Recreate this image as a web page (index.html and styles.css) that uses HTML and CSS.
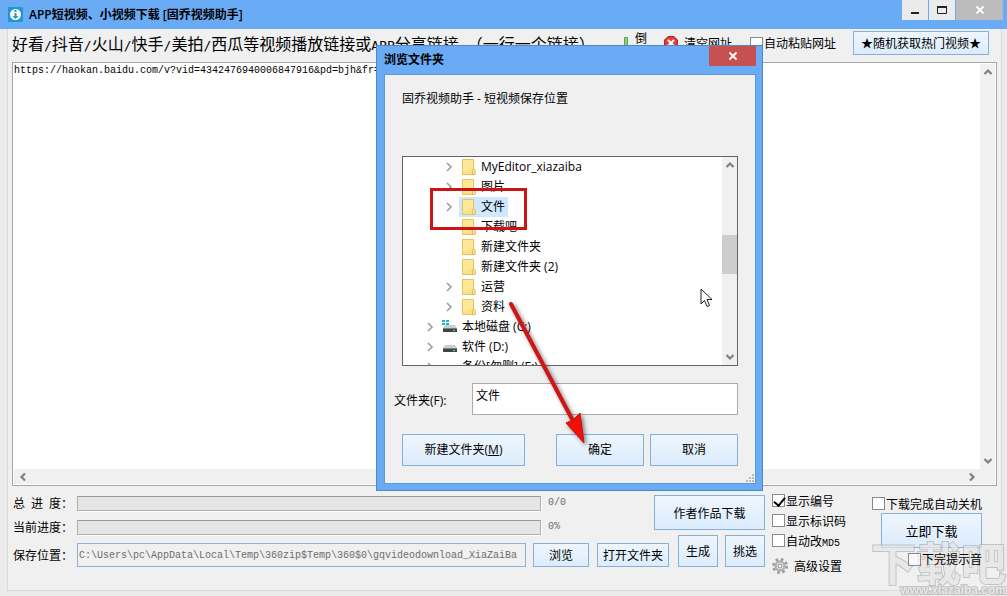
FILE: index.html
```html
<!DOCTYPE html>
<html lang="zh-CN">
<head>
  <meta charset="UTF-8">
  <title>APP短视频、小视频下载 [固乔视频助手]</title>
  <link rel="stylesheet" href="styles.css">
</head>
<body>
  <svg class="defs" width="0" height="0" aria-hidden="true">
    <symbol id="folder" viewBox="0 0 14 16">
      <path d="M.5.5h11v9.500l1.500 1v4.500H.5z" fill="#fbdf83" stroke="#e6c25c"/>
      <path d="M1 1h10v8L1 14z" fill="#ffe99f" opacity=".7"/>
      <path d="M10.500 15.500v-4l1-1.500 1.500 1.500v4z" fill="#ffedae" stroke="#dfb955"/>
    </symbol>
    <symbol id="chevron" viewBox="0 0 10 10">
      <path d="M3 1l4 4-4 4" fill="none" stroke="#a0a0a0" stroke-width="1.700"/>
    </symbol>
    <symbol id="scroll-arrow" viewBox="0 0 10 10">
      <path d="M1.500 7L5 3.500 8.500 7" fill="none" stroke="#808080" stroke-width="2.200"/>
    </symbol>
    <symbol id="drive" viewBox="0 0 16 14">
      <path d="M3 5h10l2 3H1z" fill="#c9d0d3"/>
      <path d="M1 8h14v4H1z" fill="#3d4548"/>
      <path d="M1 8h14v1H1z" fill="#798386"/>
      <path d="M11 10h2v1h-2z" fill="#6fe08c"/>
    </symbol>
    <symbol id="close" viewBox="0 0 10 10">
      <path d="M1.500 1.500l7 7m0-7l-7 7" fill="none" stroke="#fff" stroke-width="1.800"/>
    </symbol>
  </svg>

  <div class="window">
    <header class="titlebar">
      <svg class="app-icon" width="15" height="15" viewBox="0 0 15 15">
        <rect width="15" height="15" rx="1" fill="#1c9bd0"/>
        <circle cx="7.500" cy="7.500" r="5.500" fill="#fff"/>
        <path d="M6.500 3h2v2h-2zM6.500 6h2v3h2l-3 3-3-3h2z" fill="#2b92c4"/>
      </svg>
      <h1>APP短视频、小视频下载 [固乔视频助手]</h1>
      <div class="window-buttons">
        <button class="win-btn" aria-label="最小化"><svg width="10" height="10" viewBox="0 0 10 10"><path d="M1 7h8v2H1z" fill="#222"/></svg></button>
        <button class="win-btn" aria-label="最大化"><svg width="12" height="10" viewBox="0 0 12 10"><path d="M1.500 2v6.500h9V2" fill="none" stroke="#222"/><path d="M1 1h10v2H1z" fill="#222"/></svg></button>
        <button class="win-btn close" aria-label="关闭"><svg width="10" height="10"><use href="#close"/></svg></button>
      </div>
    </header>

    <main class="panel">
      <div class="toolbar">
        <label class="hint" for="urls">好看<span>/</span>抖音<span>/</span>火山<span>/</span>快手<span>/</span>美拍<span>/</span>西瓜等视频播放链接或<span>APP</span>分享链接。（一行一个链接）</label>
        <button class="tool sort">
          <svg width="6" height="16" viewBox="0 0 6 16"><path d="M1.500.5h3v15h-3z" fill="#8fd07f" stroke="#5aa84e"/></svg>
          <span>倒<br>序</span>
        </button>
        <button class="tool clear">
          <svg width="14" height="14" viewBox="0 0 14 14">
            <path d="M4 .5h6L13.500 4v6L10 13.500H4L.5 10V4z" fill="#e23a36" stroke="#b8211f"/>
            <path d="M4 4l6 6m0-6l-6 6" stroke="#fff" stroke-width="2.200"/>
          </svg>
          <span>清空网址</span>
        </button>
        <label class="check"><input type="checkbox">自动粘贴网址</label>
        <button class="btn random">★随机获取热门视频★</button>
      </div>

      <div class="url-box">
        <textarea id="urls" spellcheck="false" wrap="off">https://haokan.baidu.com/v?vid=4342476940006847916&amp;pd=bjh&amp;fr=</textarea>
        <div class="scroll vertical">
          <svg width="10" height="10"><use href="#scroll-arrow"/></svg>
          <svg class="down" width="10" height="10"><use href="#scroll-arrow"/></svg>
        </div>
        <div class="scroll horizontal">
          <svg class="left" width="10" height="10"><use href="#scroll-arrow"/></svg>
          <svg class="right" width="10" height="10"><use href="#scroll-arrow"/></svg>
        </div>
      </div>

      <div class="footer">
        <div class="output">
          <div class="output-top">
            <div class="progress-list">
              <div class="progress-row">
                <span class="label spread"><i>总</i><i>进</i><i>度：</i></span>
                <div class="bar"></div>
                <span class="value">0/0</span>
              </div>
              <div class="progress-row">
                <span class="label">当前进度：</span>
                <div class="bar"></div>
                <span class="value">0%</span>
              </div>
            </div>
            <button class="btn author">作者作品下载</button>
          </div>
          <div class="path-row">
            <label class="label" for="path">保存位置：</label>
            <input class="path" id="path" type="text" readonly value="C:\Users\pc\AppData\Local\Temp\360zip$Temp\360$0\gqvideodownload_XiaZaiBa">
            <button class="btn browse">浏览</button>
            <button class="btn open">打开文件夹</button>
            <button class="btn small">生成</button>
            <button class="btn small">挑选</button>
          </div>
        </div>
        <div class="options">
          <label class="check"><input type="checkbox" checked>显示编号</label>
          <label class="check"><input type="checkbox">显示标识码</label>
          <label class="check"><input type="checkbox"><span>自动改<span class="mono">MD5</span></span></label>
          <button class="tool settings">
            <svg width="16" height="16" viewBox="0 0 16 16">
              <circle cx="8" cy="8" r="6.500" fill="none" stroke="#9c9c9c" stroke-width="3" stroke-dasharray="2.550 2.550"/>
              <circle cx="8" cy="8" r="4.500" fill="#ececec" stroke="#b2b2b2" stroke-width="2.500"/>
              <circle cx="8" cy="8" r="2" fill="#f4f4f4" stroke="#8c8c8c"/>
            </svg>
            <span>高级设置</span>
          </button>
        </div>
        <div class="download">
          <label class="check"><input type="checkbox">下载完成自动关机</label>
          <button class="btn start">立即下载</button>
          <label class="check sound"><input type="checkbox">下完提示音</label>
        </div>
      </div>
    </main>

    <section class="dialog" role="dialog" aria-labelledby="dialog-title">
      <header class="dialog-title">
        <h2 id="dialog-title">浏览文件夹</h2>
        <button class="dialog-close" aria-label="关闭"><svg width="10" height="10"><use href="#close"/></svg></button>
      </header>
      <div class="dialog-body">
        <p>固乔视频助手 - 短视频保存位置</p>
        <div class="tree-box">
          <ul class="tree">
            <li><svg class="arrow"><use href="#chevron"/></svg><span class="node"><svg class="folder"><use href="#folder"/></svg>MyEditor_xiazaiba</span></li>
            <li><svg class="arrow"><use href="#chevron"/></svg><span class="node"><svg class="folder"><use href="#folder"/></svg>图片</span></li>
            <li><svg class="arrow"><use href="#chevron"/></svg><span class="node selected"><svg class="folder"><use href="#folder"/></svg>文件</span></li>
            <li><svg class="arrow"></svg><span class="node"><svg class="folder"><use href="#folder"/></svg>下载吧</span></li>
            <li><svg class="arrow"></svg><span class="node"><svg class="folder"><use href="#folder"/></svg>新建文件夹</span></li>
            <li><svg class="arrow"></svg><span class="node"><svg class="folder"><use href="#folder"/></svg>新建文件夹 (2)</span></li>
            <li><svg class="arrow"><use href="#chevron"/></svg><span class="node"><svg class="folder"><use href="#folder"/></svg>运营</span></li>
            <li><svg class="arrow"><use href="#chevron"/></svg><span class="node"><svg class="folder"><use href="#folder"/></svg>资料</span></li>
            <li class="root"><svg class="arrow"><use href="#chevron"/></svg><span class="node"><svg class="drive" viewBox="0 0 16 14"><use href="#drive"/><path d="M0 0h3v2H0zM4 0h3v2H4zM0 3h3v2H0zM4 3h3v2H4z" fill="#20b0d8"/></svg>本地磁盘 (C:)</span></li>
            <li class="root"><svg class="arrow"><use href="#chevron"/></svg><span class="node"><svg class="drive"><use href="#drive"/></svg>软件 (D:)</span></li>
            <li class="root"><svg class="arrow"><use href="#chevron"/></svg><span class="node"><svg class="drive"></svg>备份[勿删] (E:)</span></li>
          </ul>
          <div class="scroll vertical">
            <svg width="10" height="10"><use href="#scroll-arrow"/></svg>
            <div class="track"><div class="thumb"></div></div>
            <svg class="down" width="10" height="10"><use href="#scroll-arrow"/></svg>
          </div>
        </div>
        <div class="name-row">
          <label for="folder-name">文件夹(F):</label>
          <input id="folder-name" type="text" value="文件">
        </div>
        <div class="dialog-buttons">
          <button class="btn new-folder">新建文件夹(<u>M</u>)</button>
          <button class="btn">确定</button>
          <button class="btn">取消</button>
        </div>
        <svg class="grip" width="9" height="9" viewBox="0 0 9 9"><path d="M6 0h2v2H6zM3 3h2v2H3zM6 3h2v2H6zM0 6h2v2H0zM3 6h2v2H3zM6 6h2v2H6z" fill="#bbb"/></svg>
      </div>
    </section>

    <div class="highlight"></div>
    <svg class="pointer-arrow" width="90" height="150" viewBox="0 0 90 150">
      <path d="M7 4L68 119" stroke="#cf1515" stroke-width="4" stroke-linecap="round"/>
      <path d="M80 143L62 123l7-3 7-7z" fill="#f01008" stroke="#c81010"/>
    </svg>
    <svg class="cursor" width="13" height="20" viewBox="0 0 13 20">
      <path d="M1 1v15l3.500-3.500L7 18.500l2.500-1L7 11.500h5z" fill="#fff" stroke="#222"/>
    </svg>
    <div class="watermark">
      <span class="mark">下载吧</span>
      <span class="site">www.xiazaiba.com</span>
    </div>
  </div>
</body>
</html>
```
FILE: styles.css
```css
* {
  box-sizing: border-box;
}

body {
  margin: 0;
  font-family: "Noto Sans CJK SC", sans-serif;
  font-size: 12px;
  line-height: 16px;
  color: #000;
  background: #ebebeb;
}

button,
input,
textarea {
  margin: 0;
  padding: 0;
  font: inherit;
  color: inherit;
  border-radius: 0;
}

svg {
  flex: none;
}

.defs {
  position: absolute;
}

.window {
  position: relative;
  display: flex;
  flex-direction: column;
  min-height: 100vh;
  overflow: hidden;
}

.titlebar {
  display: flex;
  align-items: center;
  height: 29px;
  padding-left: 8px;
  background: #6aabf6;
}

.titlebar h1 {
  flex: 1;
  margin: 0 0 0 6px;
  font-family: "Open Sans", "Noto Sans CJK SC", sans-serif;
  font-size: 12px;
  font-weight: 600;
}

.window-buttons {
  display: flex;
  align-self: flex-start;
  gap: 1px;
  padding-right: 4px;
}

.win-btn {
  display: flex;
  align-items: center;
  justify-content: center;
  width: 26px;
  height: 20px;
  border: none;
  background: #ebebeb;
}

.win-btn.close {
  width: 47px;
  background: #bcbcbc;
}

.panel {
  flex: 1;
  display: flex;
  flex-direction: column;
  margin: 0 5px 5px 7px;
  padding: 0 4px;
  border: 1px solid #d9d9d9;
  border-top: none;
  background: #f0f0f0;
}

.toolbar {
  display: flex;
  align-items: flex-start;
  height: 33px;
  padding: 2px 8px 0 0;
}

.hint {
  flex: 1;
  font-size: 16px;
  line-height: 24px;
  white-space: nowrap;
}

.hint span {
  font-family: "DejaVu Sans Mono", monospace;
  font-size: 13px;
}

.tool {
  display: flex;
  align-items: center;
  gap: 6px;
  border: none;
  background: none;
  white-space: nowrap;
}

.sort {
  line-height: 14px;
  margin-right: 17px;
}

.clear {
  height: 24px;
  margin-right: 18px;
}

.check {
  display: flex;
  align-items: center;
  gap: 1px;
  white-space: nowrap;
}

.toolbar .check {
  height: 24px;
  margin-right: 17px;
}

.check input {
  flex: none;
  width: 13px;
  height: 13px;
  appearance: none;
  border: 1px solid #8a8a8a;
  background: #fff;
}

.check input:checked::before {
  content: "";
  display: block;
  width: 5px;
  height: 9px;
  margin-left: 3px;
  border: solid #000;
  border-width: 0 2px 2px 0;
  transform: rotate(40deg);
}

.btn {
  border: 1px solid #84b1dc;
  background: linear-gradient(#eef6fe, #dcecfc);
  white-space: nowrap;
}

.btn:hover {
  background: #d5e9fd;
}

.random {
  width: 136px;
  height: 24px;
}

.url-box {
  flex: 1;
  display: grid;
  grid-template-columns: 1fr 15px;
  grid-template-rows: 1fr 15px;
  padding: 1px;
  border: 1px solid #a5a5a5;
  background: #fff;
}

.url-box textarea {
  border: none;
  outline: none;
  resize: none;
  overflow: hidden;
  font-family: "Liberation Mono", monospace;
  font-size: 10px;
  line-height: 14px;
  background: #fff;
}

.scroll {
  display: flex;
  align-items: center;
  justify-content: space-between;
  background: #f0f0f0;
}

.scroll.vertical {
  flex-direction: column;
  padding: 3px 0;
}

.scroll.horizontal {
  grid-column: 1 / 3;
  padding: 0 18px 0 4px;
}

.down {
  transform: rotate(180deg);
}

.left {
  transform: rotate(-90deg);
}

.right {
  transform: rotate(90deg);
}

.footer {
  display: flex;
  height: 104px;
  padding: 8px 15px 0 0;
}

.output {
  flex: 1;
  display: flex;
  flex-direction: column;
  padding-top: 1px;
}

.output-top {
  display: flex;
  align-items: flex-start;
}

.progress-list {
  flex: 1;
  display: flex;
  flex-direction: column;
  gap: 8px;
}

.progress-row {
  display: flex;
  align-items: center;
}

.label {
  width: 65px;
  padding-left: 1px;
  white-space: nowrap;
}

.spread {
  display: flex;
  gap: 6px;
}

.spread i {
  font-style: normal;
}

.bar {
  flex: 1;
  height: 15px;
  border: 1px solid #b0b0b0;
  border-top-color: #989898;
  background: #e5e5e5;
  box-shadow: 1px 1px 0 #fff;
}

.value {
  width: 113px;
  padding-left: 7px;
  font-family: "Liberation Mono", monospace;
  font-size: 10px;
  color: #6d6d6d;
}

.author {
  width: 111px;
  height: 35px;
}

.path-row {
  display: flex;
  align-items: flex-end;
  height: 32px;
}

.path-row .label {
  line-height: 24px;
}

.path {
  flex: 1;
  min-width: 0;
  height: 24px;
  padding: 0 1px;
  border: 1px solid #8fb2da;
  font-family: "Liberation Mono", monospace;
  font-size: 10px;
  color: #6d6d6d;
  background: #f0f0f0;
}

.browse {
  width: 56px;
  height: 24px;
  margin: 0 8px 0 7px;
}

.open {
  width: 72px;
  height: 24px;
  margin-right: 9px;
}

.small {
  width: 40px;
  height: 32px;
}

.small + .small {
  margin-left: 7px;
}

.options {
  display: flex;
  flex-direction: column;
  width: 100px;
  padding-left: 7px;
}

.options .check {
  height: 20px;
  align-items: flex-start;
  line-height: 14px;
}

.mono {
  font-family: "Liberation Mono", monospace;
  font-size: 10px;
}

.settings {
  height: 24px;
}

.download {
  display: flex;
  flex-direction: column;
  align-items: flex-end;
  padding-left: 7px;
}

.download .check {
  height: 19px;
}

.start {
  width: 101px;
  height: 35px;
  font-size: 13px;
}

.download .sound {
  position: relative;
  z-index: 1;
  height: 22px;
}

.sound input {
  background: rgba(255, 255, 255, 0.6);
}

.dialog {
  position: absolute;
  left: 376px;
  top: 45px;
  width: 387px;
  padding: 0 6px 6px 7px;
  border: 1px solid #4f88c4;
  background: #6aabf6;
  font-family: "Open Sans", "Noto Sans CJK SC", sans-serif;
}

.dialog-title {
  display: flex;
  align-items: flex-start;
  justify-content: space-between;
  height: 28px;
}

.dialog-title h2 {
  margin: 0;
  font-size: 12px;
  font-weight: 600;
  line-height: 28px;
}

.dialog-close {
  display: flex;
  align-items: center;
  justify-content: center;
  width: 47px;
  height: 20px;
  border: none;
  background: #c75050;
}

.dialog-body {
  position: relative;
  padding: 16px 17px 17px;
  border: 1px solid #5d97d6;
  background: #f0f0f0;
}

.dialog-body p {
  margin: 0 0 49px;
}

.tree-box {
  display: flex;
  height: 210px;
  border: 1px solid #646464;
  background: #fff;
}

.tree {
  flex: 1;
  margin: 0;
  padding: 0;
  overflow: hidden;
  list-style: none;
}

.tree li {
  display: flex;
  align-items: center;
  height: 20px;
  padding-left: 41px;
}

.tree li.root {
  padding-left: 22px;
}

.arrow {
  width: 10px;
  height: 10px;
  margin-right: 5px;
}

.node {
  display: flex;
  align-items: center;
  gap: 5px;
  height: 20px;
  padding: 0 3px;
  white-space: nowrap;
}

.node.selected {
  background: #cde8ff;
}

.folder {
  width: 14px;
  height: 16px;
}

.root .node {
  gap: 4px;
  padding: 0 2px;
}

.drive {
  width: 16px;
  height: 14px;
}

.tree-box .scroll {
  width: 15px;
}

.track {
  flex: 1;
  padding-top: 65px;
}

.thumb {
  width: 15px;
  height: 39px;
  background: #cdcdcd;
}

.name-row {
  display: flex;
  align-items: center;
  margin: 17px 0 19px -8px;
}

.name-row label {
  width: 78px;
  padding-top: 4px;
}

.name-row input {
  flex: 1;
  min-width: 0;
  height: 32px;
  padding: 0 3px 8px;
  border: 1px solid #ababab;
  background: #fff;
}

.dialog-buttons {
  display: flex;
  gap: 6px;
}

.dialog-buttons .btn {
  width: 88px;
  height: 32px;
}

.dialog-buttons .new-folder {
  width: 123px;
  margin-right: auto;
}

.grip {
  position: absolute;
  right: 0;
  bottom: 0;
}

/* marks drawn over the windows */
.highlight {
  position: absolute;
  left: 430px;
  top: 188px;
  width: 97px;
  height: 42px;
  border: 3px solid #cc1414;
}

.pointer-arrow {
  position: absolute;
  left: 504px;
  top: 300px;
  filter: drop-shadow(2px 2px 2px rgba(0, 0, 0, 0.5));
}

.cursor {
  position: absolute;
  left: 700px;
  top: 288px;
}

.watermark {
  position: absolute;
  right: 1px;
  bottom: 0;
  display: flex;
  flex-direction: column;
  align-items: flex-end;
  color: #e6e6e6;
  font-weight: 700;
  opacity: 0.75;
  pointer-events: none;
}

.mark,
.site {
  paint-order: stroke fill;
  -webkit-text-stroke: 2px #b4b4b4;
}

.mark {
  font-size: 45px;
  line-height: 44px;
}

.site {
  font-family: "Liberation Sans", sans-serif;
  font-size: 12px;
  line-height: 12px;
}
```
